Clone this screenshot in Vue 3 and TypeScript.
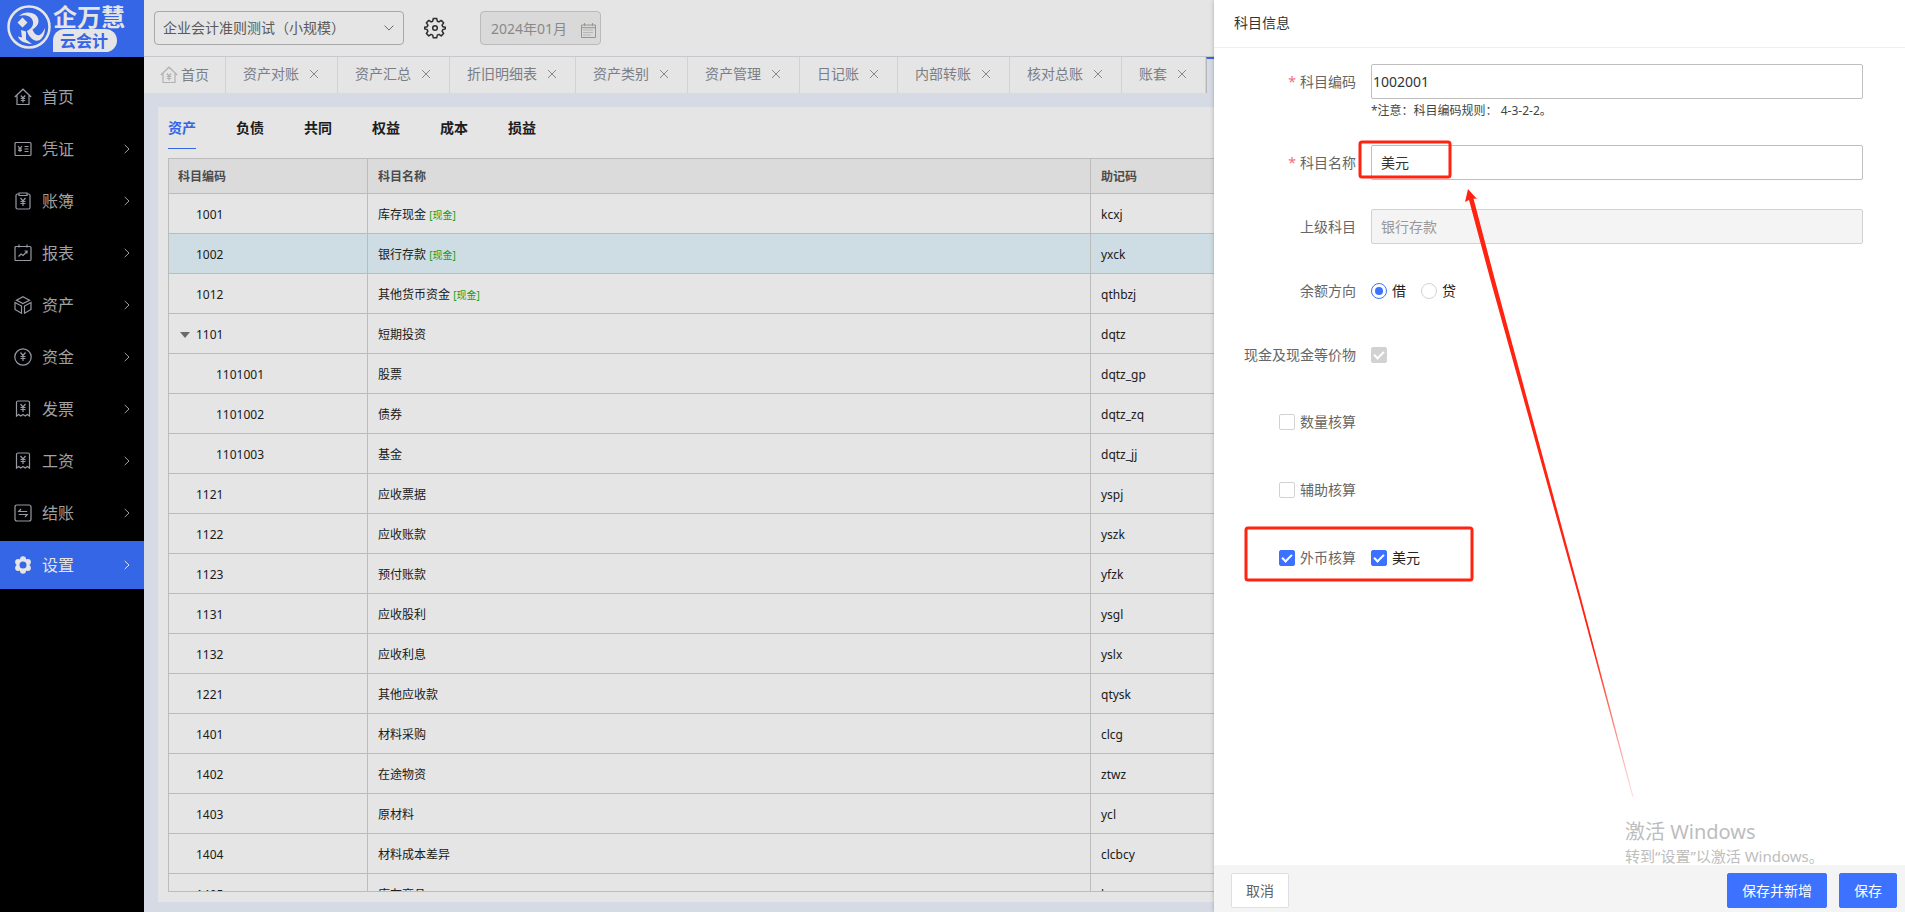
<script setup lang="ts">
import { ref } from 'vue'

interface MenuItem {
  label: string
  paths: string[]
  arrow: boolean
}
interface Subject {
  code: string
  name: string
  memo: string
  cash?: boolean
  child?: boolean
  open?: boolean
}

const yen = 'M6.5 6 9 9l2.5-3M9 9v5M6.5 9.5h5M6.5 11.5h5'
const receipt = 'M2.5 16V2.500Q2.500 1 4 1h10q1.500 0 1.500 1.500V16l-2.200-1.500L11.200 16 9 14.500 6.800 16l-2.100-1.500Z'
const receiptYen = 'M6.500 4 9 7l2.500-3M9 7v5M6.500 7.500h5M6.500 9.500h5'

const menu: MenuItem[] = [
  { label: '首页', arrow: false, paths: ['M.8 9 9 1.200 17.200 9M3 7.500V16.500h12V7.500', 'M6.800 7.500 9 10l2.200-2.500M9 10v4.500M6.800 10.500h4.400M6.800 12.500h4.400'] },
  { label: '凭证', arrow: true, paths: ['M2 2.500h14q1 0 1 1v11q0 1-1 1H2q-1 0-1-1v-11q0-1 1-1Z', 'M4 6l2 2.500L8 6M6 8.500V12M4 9h4M4 10.500h4M10.500 6.500h4M10.500 9h4M10.500 11.500h4'] },
  { label: '账簿', arrow: true, paths: ['M5 2H3.500Q2 2 2 3.500v12Q2 17 3.500 17h11q1.500 0 1.500-1.500v-12Q16 2 14.500 2H13M5 1h8v2.500H5Z', yen] },
  { label: '报表', arrow: true, paths: ['M2 2.500h14q1 0 1 1v12q0 1-1 1H2q-1 0-1-1v-12q0-1 1-1ZM5 .5v3M13 .5v3', 'M4.500 12.500 7 10l2 1.500L13 7.500M10.500 7H13v2.500'] },
  { label: '资产', arrow: true, paths: ['M9 .8 15.500 4.300 9 7.500 2.500 4.300Z', 'M1 6.500 7.500 10v7.200L1 13.500ZM17 6.500 10.500 10v7.200L17 13.500Z'] },
  { label: '资金', arrow: true, paths: ['M9 .8a8.200 8.200 0 1 0 0 16.400A8.200 8.200 0 1 0 9 .8Z', 'M6.500 4.500 9 7.500l2.500-3M9 7.500V13M6.500 8.500h5M6.500 10.500h5'] },
  { label: '发票', arrow: true, paths: [receipt, receiptYen] },
  { label: '工资', arrow: true, paths: [receipt, receiptYen] },
  { label: '结账', arrow: true, paths: ['M3 1h12q2 0 2 2v12q0 2-2 2H3q-2 0-2-2V3q0-2 2-2Z', 'M7 5 4.800 7.500h8.400M4.800 10.500h8.400L11 13'] },
]

const openTabs = ['资产对账', '资产汇总', '折旧明细表', '资产类别', '资产管理', '日记账', '内部转账', '核对总账', '账套']
const kinds = ['资产', '负债', '共同', '权益', '成本', '损益']
const activeKind = ref('资产')
const selected = ref('1002')

const subjects: Subject[] = [
  { code: '1001', name: '库存现金', memo: 'kcxj', cash: true },
  { code: '1002', name: '银行存款', memo: 'yxck', cash: true },
  { code: '1012', name: '其他货币资金', memo: 'qthbzj', cash: true },
  { code: '1101', name: '短期投资', memo: 'dqtz', open: true },
  { code: '1101001', name: '股票', memo: 'dqtz_gp', child: true },
  { code: '1101002', name: '债券', memo: 'dqtz_zq', child: true },
  { code: '1101003', name: '基金', memo: 'dqtz_jj', child: true },
  { code: '1121', name: '应收票据', memo: 'yspj' },
  { code: '1122', name: '应收账款', memo: 'yszk' },
  { code: '1123', name: '预付账款', memo: 'yfzk' },
  { code: '1131', name: '应收股利', memo: 'ysgl' },
  { code: '1132', name: '应收利息', memo: 'yslx' },
  { code: '1221', name: '其他应收款', memo: 'qtysk' },
  { code: '1401', name: '材料采购', memo: 'clcg' },
  { code: '1402', name: '在途物资', memo: 'ztwz' },
  { code: '1403', name: '原材料', memo: 'ycl' },
  { code: '1404', name: '材料成本差异', memo: 'clcbcy' },
  { code: '1405', name: '库存商品', memo: 'kcsp' },
]

const code = ref('1002001')
const name = ref('美元')
const parent = ref('银行存款')
const direction = ref('debit')
const cash = ref(true)
const quantity = ref(false)
const assist = ref(false)
const foreign = ref(true)
const usd = ref(true)
</script>

<template>
  <div class="app">
    <aside class="side">
      <div class="logo">
        <svg class="mark" viewBox="0 0 44 44" aria-hidden="true">
          <circle cx="22" cy="22" r="20.500" fill="none" stroke="#fff" stroke-width="2.500" />
          <path fill="#fff" d="M12 11C18 5 31 7 31.500 15.500c.2 4-2.500 7-6 9 1.500 4 4 6.500 7 5.500 2.500-1 4-4 5.500-7C38 32 33 37 28 35.500 24 34 21 29.500 20 26c4-2 6.500-5 6-9-.5-5-7-8-14-6Z" />
          <path fill="#fff" d="m15.500 12.500 5 5-5 5-5-5ZM14 25l5 1.500v8l6 4.500C17 38.500 11.500 35 11 31.500l4 1Z" />
        </svg>
        <div class="brand">
          <span class="brand-name">企万慧</span>
          <span class="brand-sub">云会计</span>
        </div>
      </div>
      <nav class="menu">
        <a v-for="m in menu" :key="m.label" href="#" class="menu-item">
          <svg class="menu-icon" viewBox="0 0 18 18" aria-hidden="true">
            <path v-for="p in m.paths" :key="p" :d="p" />
          </svg>
          <span>{{ m.label }}</span>
          <svg v-if="m.arrow" class="menu-arrow" viewBox="0 0 6 10" aria-hidden="true"><path d="M.7.9 5 5 .7 9.100" /></svg>
        </a>
        <a href="#" class="menu-item active">
          <svg class="menu-icon" viewBox="0 0 18 18" aria-hidden="true">
            <g class="solid">
              <circle cx="9" cy="9" r="6.500" />
              <circle cx="9" cy="3.300" r="3" /><circle cx="13.900" cy="6" r="3" /><circle cx="13.900" cy="12" r="3" />
              <circle cx="9" cy="14.700" r="3" /><circle cx="4.100" cy="12" r="3" /><circle cx="4.100" cy="6" r="3" />
            </g>
            <circle class="hole" cx="9" cy="9" r="3.500" />
          </svg>
          <span>设置</span>
          <svg class="menu-arrow" viewBox="0 0 6 10" aria-hidden="true"><path d="M.7.9 5 5 .7 9.100" /></svg>
        </a>
      </nav>
    </aside>

    <div class="main">
      <header class="topbar">
        <div class="select-wrap">
          <select class="book" aria-label="账套">
            <option>企业会计准则测试（小规模）</option>
          </select>
          <svg class="caret" viewBox="0 0 10 6" aria-hidden="true"><path d="M.6.6 5 5.100 9.400.6" /></svg>
        </div>
        <button type="button" class="gear" aria-label="设置">
          <svg viewBox="0 0 22 22" aria-hidden="true">
            <path d="M9.300 1.500h3.400l.6 2.700 1.600.7 2.300-1.500 2.400 2.400-1.500 2.300.7 1.600 2.700.6v1.400l-2.700.9-.7 1.600 1.500 2.300-2.400 2.400-2.300-1.500-1.600.7-.6 2.700H9.300l-.6-2.700-1.600-.7-2.300 1.500-2.400-2.400 1.500-2.300-.7-1.600-2.700-.9v-1.400l2.700-.6.7-1.600-1.500-2.300 2.400-2.400 2.300 1.500 1.600-.7Z" />
            <circle cx="11" cy="11" r="2.300" />
          </svg>
        </button>
        <div class="date-wrap">
          <input class="date" type="text" value="2024年01月" aria-label="期间" disabled />
          <svg class="calendar" viewBox="0 0 15 15" aria-hidden="true">
            <path d="M.5 2h14v12.500H.5ZM.5 4.700h14M3.500 0v3M11.500 0v3" />
            <path class="dots" d="M2.500 7h10M2.500 9.500h10M2.500 12h7" />
          </svg>
        </div>
      </header>

      <nav class="tabs">
        <a href="#" class="tab home">
          <svg viewBox="0 0 18 18" aria-hidden="true"><path v-for="p in menu[0].paths" :key="p" :d="p" /></svg>
          首页
        </a>
        <div v-for="t in openTabs" :key="t" class="tab">
          <a href="#">{{ t }}</a>
          <button type="button" class="close" :aria-label="'关闭' + t">
            <svg viewBox="0 0 10 10" aria-hidden="true"><path d="m1 1 8 8M9 1 1 9" /></svg>
          </button>
        </div>
        <div class="tab current"></div>
      </nav>

      <section class="panel">
        <div class="kinds">
          <button v-for="k in kinds" :key="k" type="button" class="kind" :class="{ on: k === activeKind }" @click="activeKind = k">{{ k }}</button>
        </div>
        <div class="table-box">
          <table>
            <colgroup><col class="col-code" /><col class="col-name" /><col /></colgroup>
            <thead>
              <tr><th class="code-head">科目编码</th><th>科目名称</th><th>助记码</th></tr>
            </thead>
            <tbody>
              <tr v-for="s in subjects" :key="s.code" :class="{ picked: s.code === selected }" @click="selected = s.code">
                <td class="code" :class="{ child: s.child, open: s.open }">{{ s.code }}</td>
                <td>{{ s.name }} <span v-if="s.cash" class="cash">[现金]</span></td>
                <td>{{ s.memo }}</td>
              </tr>
            </tbody>
          </table>
        </div>
      </section>
    </div>

    <div class="mask"></div>

    <form class="drawer" @submit.prevent>
      <h1 class="drawer-title">科目信息</h1>
      <div class="fields">
        <div class="row">
          <label class="label required" for="code">科目编码</label>
          <div class="control">
            <input id="code" v-model="code" class="text tight" type="text" />
            <p class="hint">*注意：科目编码规则： 4-3-2-2。</p>
          </div>
        </div>
        <div class="row">
          <label class="label required" for="name">科目名称</label>
          <div class="control"><input id="name" v-model="name" class="text" type="text" /></div>
        </div>
        <div class="row">
          <label class="label" for="parent">上级科目</label>
          <div class="control"><input id="parent" v-model="parent" class="text" type="text" disabled /></div>
        </div>
        <div class="row" role="radiogroup" aria-labelledby="direction-label">
          <span id="direction-label" class="label">余额方向</span>
          <div class="control inline">
            <label class="choice"><input v-model="direction" type="radio" value="debit" />借</label>
            <label class="choice"><input v-model="direction" type="radio" value="credit" />贷</label>
          </div>
        </div>
        <div class="row">
          <label class="label" for="cash">现金及现金等价物</label>
          <div class="control inline"><input id="cash" v-model="cash" type="checkbox" disabled /></div>
        </div>
        <div class="row tall">
          <label class="label choice"><input v-model="quantity" type="checkbox" />数量核算</label>
        </div>
        <div class="row tall">
          <label class="label choice"><input v-model="assist" type="checkbox" />辅助核算</label>
        </div>
        <div class="row tall">
          <label class="label choice"><input v-model="foreign" type="checkbox" />外币核算</label>
          <div class="control inline"><label class="choice"><input v-model="usd" type="checkbox" />美元</label></div>
        </div>
      </div>
      <footer class="actions">
        <button type="button" class="btn">取消</button>
        <span class="spacer"></span>
        <button type="button" class="btn primary">保存并新增</button>
        <button type="submit" class="btn primary">保存</button>
      </footer>

      <div class="watermark">
        <p class="wm-title">激活 Windows</p>
        <p class="wm-text">转到“设置”以激活 Windows。</p>
      </div>
      <svg class="notes" viewBox="0 0 690 912" aria-hidden="true">
        <defs>
          <linearGradient id="fade" x1="0" y1="189" x2="0" y2="797" gradientUnits="userSpaceOnUse">
            <stop offset="0.75" stop-color="#ff2312" />
            <stop offset="1" stop-color="#ff2312" stop-opacity="0.15" />
          </linearGradient>
        </defs>
        <rect x="145" y="142" width="90" height="35" rx="2" />
        <rect x="31" y="528" width="226" height="52" rx="2" />
        <path fill="url(#fade)" d="M253 189 262 199 258.500 198.500 280.500 282 366.500 600 418.500 797 417.500 797 364.500 600 276 282 254 200 250 202Z" />
      </svg>
    </form>
  </div>
</template>

<style>
body {
  margin: 0;
  overflow: hidden;
}
</style>

<style scoped>
.app {
  position: relative;
  display: flex;
  height: 100vh;
  overflow: hidden;
  background: #eff3fe;
  color: #222;
  font: 14px/20px "Noto Sans", "Noto Sans CJK SC", sans-serif;
}
.app *,
.app *::before,
.app *::after {
  box-sizing: border-box;
}
button,
input,
select {
  margin: 0;
  font: inherit;
}
a {
  color: inherit;
  text-decoration: none;
}

.side {
  flex: none;
  width: 144px;
  background: #000;
}
.logo {
  display: flex;
  height: 57px;
  padding: 5px 0 0 7px;
  gap: 2px;
  background: #3c72ff;
}
.mark {
  flex: none;
  width: 44px;
  height: 44px;
}
.brand {
  display: flex;
  flex-direction: column;
  align-items: flex-start;
  color: #fff;
  font-weight: 700;
}
.brand-name {
  font-family: "Noto Sans CJK SC", sans-serif;
  font-size: 24px;
  line-height: 22px;
  white-space: nowrap;
}
.brand-sub {
  height: 23px;
  margin-top: 2px;
  padding: 0 9px 0 7px;
  border-radius: 12px 12px 12px 0;
  background: #fff;
  color: #3c72ff;
  font-size: 16px;
  line-height: 24px;
}
.menu {
  display: flex;
  flex-direction: column;
  gap: 4px;
  padding-top: 16px;
}
.menu-item {
  display: flex;
  align-items: center;
  height: 48px;
  padding: 0 14px;
  gap: 10px;
  color: #b4b4b4;
  font-size: 16px;
}
.menu-item.active {
  background: #3c72ff;
  color: #fff;
}
.menu-icon {
  width: 18px;
  height: 18px;
  fill: none;
  stroke: #a9acb8;
  stroke-width: 1.2;
}
.solid {
  fill: #fff;
  stroke: none;
}
.hole {
  fill: #3c72ff;
  stroke: none;
}
.menu-arrow {
  width: 6px;
  height: 10px;
  margin-left: auto;
  fill: none;
  stroke: currentColor;
}

.main {
  display: flex;
  flex: 1;
  flex-direction: column;
  min-width: 0;
}
.topbar {
  display: flex;
  flex: none;
  align-items: flex-start;
  height: 57px;
  padding: 11px 10px 0;
  border-bottom: 1px solid #dedee6;
  background: #fff;
}
.select-wrap,
.date-wrap {
  position: relative;
  display: flex;
}
.book {
  width: 250px;
  height: 34px;
  padding: 0 8px;
  border: 1px solid #bbb;
  border-radius: 4px;
  appearance: none;
  background: #fff;
  color: #666;
}
.caret {
  position: absolute;
  top: 14px;
  right: 10px;
  width: 10px;
  height: 6px;
  fill: none;
  stroke: #777;
}
.gear {
  width: 22px;
  height: 22px;
  margin: 6px 34px 0 20px;
  padding: 0;
  border: 0;
  background: none;
}
.gear svg {
  display: block;
  fill: none;
  stroke: #333;
  stroke-linejoin: round;
  stroke-width: 1.5;
}
.date {
  width: 121px;
  height: 34px;
  padding: 0 10px;
  border: 1px solid #d0d0d0;
  border-radius: 4px;
  background: #f2f2f2;
  color: #999;
}
.calendar {
  position: absolute;
  top: 12px;
  right: 5px;
  width: 15px;
  height: 15px;
  fill: none;
  stroke: #aaa49c;
}
.dots {
  stroke-dasharray: 1 1;
}

.tabs {
  display: flex;
  flex: none;
  height: 36px;
  overflow: hidden;
  background: #fff;
  color: #8a8d93;
}
.tab {
  display: flex;
  flex: none;
  align-items: center;
  padding: 0 15px 2px 17px;
  border-right: 1px solid #eaeaea;
  white-space: nowrap;
}
.tab.home {
  width: 82px;
  padding: 0 0 0 16px;
  gap: 3px;
}
.home svg {
  width: 18px;
  height: 18px;
  fill: none;
  stroke: #c6c6c6;
  stroke-width: 1.2;
}
.close {
  width: 16px;
  height: 16px;
  margin-left: 7px;
  padding: 3px;
  border: 0;
  background: none;
}
.close svg {
  display: block;
  fill: none;
  stroke: #999;
}
.tab.current {
  width: 112px;
  border-top: 2px solid #3c72ff;
  border-left: 1px solid #ccc;
  background: #eff3fe;
}

.panel {
  display: flex;
  flex: 1;
  flex-direction: column;
  min-height: 0;
  margin: 14px 14px 10px;
  padding: 0 10px 10px;
  background: #fff;
}
.kinds {
  display: flex;
  flex: none;
  height: 51px;
  gap: 40px;
}
.kind {
  height: 42px;
  padding: 0;
  border: 0;
  border-bottom: 1px solid transparent;
  background: none;
  color: #222;
  font-weight: 700;
}
.kind.on {
  border-color: #3c72ff;
  color: #3c72ff;
}
.table-box {
  flex: 1;
  min-height: 0;
  overflow: hidden;
  border: 1px solid #d2d2d2;
}
table {
  width: 100%;
  border-spacing: 0;
  table-layout: fixed;
  font-size: 12px;
  line-height: 18px;
}
.col-code {
  width: 199px;
}
.col-name {
  width: 723px;
}
th,
td {
  height: 40px;
  padding: 2px 10px 0;
  border-right: 1px solid #d2d2d2;
  border-bottom: 1px solid #d2d2d2;
  text-align: left;
}
th {
  height: 35px;
  background: #f4f4f4;
  color: #555;
  font-weight: 700;
}
.picked td {
  background: #e5f6fd;
}
.code-head {
  padding-left: 9px;
}
.code {
  padding-left: 27px;
}
.code.child {
  padding-left: 47px;
}
.code.open {
  padding-left: 11px;
}
.code.open::before {
  display: inline-block;
  margin-right: 6px;
  border: 5px solid transparent;
  border-top: 6px solid #777;
  border-bottom: 0;
  vertical-align: 1px;
  content: "";
}
.cash {
  color: #20b020;
  font-size: 10px;
}

.mask {
  position: absolute;
  inset: 0;
  background: rgba(0, 0, 0, 0.1);
}
.drawer {
  position: absolute;
  inset: 0 0 0 auto;
  display: flex;
  flex-direction: column;
  width: 691px;
  background: #fff;
  box-shadow: 0 0 4px rgba(0, 0, 0, 0.25);
}
.drawer-title {
  flex: none;
  height: 48px;
  margin: 0;
  padding: 13px 20px;
  border-bottom: 1px solid #eee;
  color: #333;
  font-size: 14px;
  font-weight: 400;
}
.fields {
  flex: 1;
  padding: 16px 42px 0 0;
}
.row {
  display: flex;
  min-height: 35px;
  margin-bottom: 29px;
}
.row.tall {
  min-height: 41px;
  margin-bottom: 27px;
}
.label {
  flex: none;
  width: 142px;
  margin-right: 15px;
  color: #666;
  line-height: 35px;
  text-align: right;
}
.required::before {
  margin-right: 4px;
  color: #f56c7c;
  content: "*";
}
.control {
  flex: 1;
  min-width: 0;
}
.control.inline {
  display: flex;
  align-items: center;
  gap: 15px;
}
.choice {
  display: flex;
  align-items: center;
  gap: 5px;
}
.label.choice {
  justify-content: flex-end;
}
.text {
  display: block;
  width: 100%;
  height: 35px;
  padding: 0 9px 2px;
  border: 1px solid #bfbfbf;
  border-radius: 2px;
  background: #fff;
  color: #333;
}
.text.tight {
  padding: 0 1px;
}
.text:disabled {
  border-color: #d2d2d2;
  background: #f4f4f4;
  color: #999;
}
.hint {
  height: 17px;
  margin: 0;
  padding-top: 3px;
  color: #444;
  font-size: 12px;
  line-height: 18px;
}
input[type="radio"],
input[type="checkbox"] {
  display: grid;
  flex: none;
  width: 16px;
  height: 16px;
  border: 1px solid #d2d2d2;
  border-radius: 2px;
  appearance: none;
  background: #fff;
  place-content: center;
}
input[type="radio"] {
  border-radius: 50%;
}
input[type="radio"]:checked {
  border-color: #3c72ff;
}
input[type="radio"]:checked::before {
  width: 8px;
  height: 8px;
  border-radius: 50%;
  background: #3c72ff;
  content: "";
}
input[type="checkbox"]:checked {
  border-color: #3c72ff;
  background: #3c72ff;
}
input[type="checkbox"]:checked:disabled {
  border-color: #d2d2d2;
  background: #d2d2d2;
}
input[type="checkbox"]:checked::before {
  width: 10px;
  height: 6px;
  border: solid #fff;
  border-width: 0 0 2px 2px;
  transform: translateY(-1px) rotate(-45deg);
  content: "";
}
.actions {
  z-index: 1;
  display: flex;
  flex: none;
  height: 47px;
  padding: 8px 8px 4px 17px;
  gap: 12px;
  background: #f4f4f4;
}
.spacer {
  flex: 1;
}
.btn {
  height: 35px;
  padding: 0 14px;
  border: 1px solid #dcdfe6;
  border-radius: 2px;
  background: #fff;
  color: #606266;
}
.btn.primary {
  border-color: #3c72ff;
  background: #3c72ff;
  color: #fff;
}
.watermark {
  position: absolute;
  right: 84px;
  bottom: 45px;
  width: 196px;
  color: #bdbdbd;
  white-space: nowrap;
}
.watermark p {
  margin: 0;
}
.wm-title {
  font-size: 20px;
  line-height: 26px;
}
.wm-text {
  font-size: 15px;
  line-height: 22px;
}
.notes {
  position: absolute;
  top: 0;
  right: 0;
  z-index: 2;
  width: 690px;
  height: 912px;
  fill: none;
  pointer-events: none;
}
.notes rect {
  stroke: #ff2312;
  stroke-width: 3;
}
</style>
